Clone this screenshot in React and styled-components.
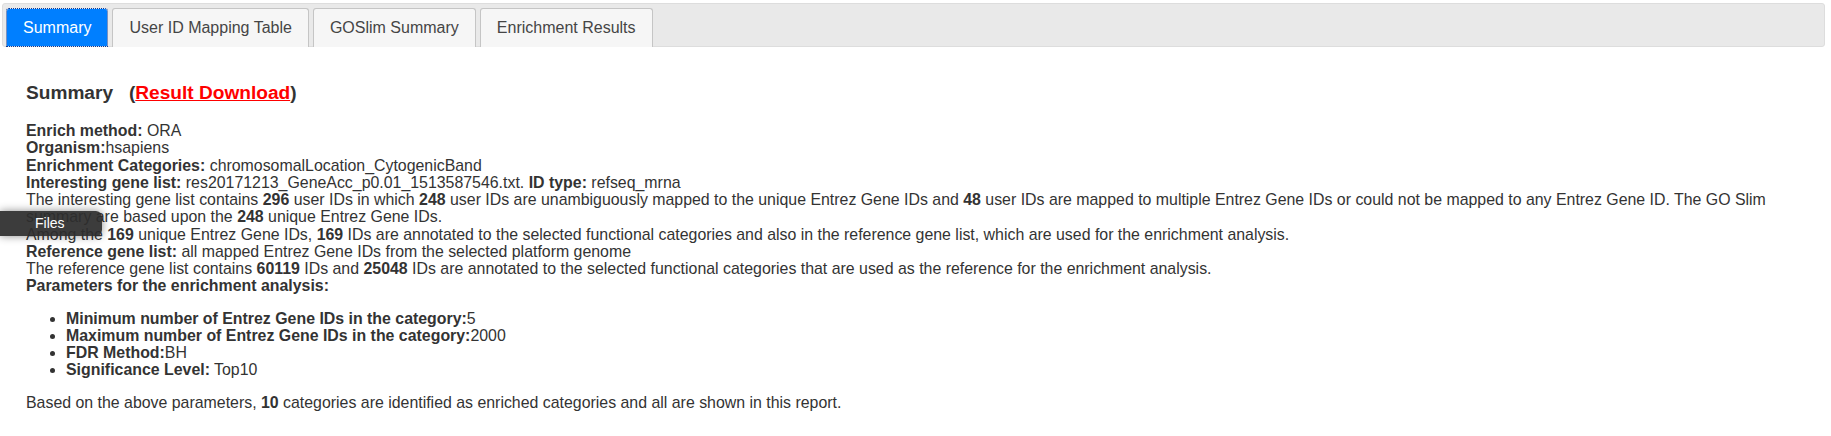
import React from 'react';
import styled, { createGlobalStyle } from 'styled-components';

const GlobalStyle = createGlobalStyle`
  body {
    margin: 0;
    background: #fff;
    font-family: "Liberation Sans", Arial, Helvetica, sans-serif;
  }
`;

const tabs = ['Summary', 'User ID Mapping Table', 'GOSlim Summary', 'Enrichment Results'];

const params = [
  { label: 'Minimum number of Entrez Gene IDs in the category:', value: '5' },
  { label: 'Maximum number of Entrez Gene IDs in the category:', value: '2000' },
  { label: 'FDR Method:', value: 'BH' },
  { label: 'Significance Level:', value: ' Top10' },
];

const App = () => {
  return (
    <Page>
      <GlobalStyle />
      <TabNav>
        {tabs.map((t, i) => (
          <Tab key={t} active={i === 0}>
            {t}
          </Tab>
        ))}
      </TabNav>

      <Panel>
        <Heading>
          Summary&nbsp;&nbsp;&nbsp;(<DownloadLink href="#">Result Download</DownloadLink>)
        </Heading>

        <Info>
          <div>
            <b>Enrich method:</b> ORA
          </div>
          <div>
            <b>Organism:</b>hsapiens
          </div>
          <div>
            <b>Enrichment Categories:</b> chromosomalLocation_CytogenicBand
          </div>
          <div>
            <b>Interesting gene list:</b> res20171213_GeneAcc_p0.01_1513587546.txt.{' '}
            <b>ID type:</b> refseq_mrna
          </div>
          <div>
            The interesting gene list contains <b>296</b> user IDs in which <b>248</b> user
            IDs are unambiguously mapped to the unique Entrez Gene IDs and <b>48</b> user IDs
            are mapped to multiple Entrez Gene IDs or could not be mapped to any Entrez Gene
            ID. The GO Slim summary are based upon the <b>248</b> unique Entrez Gene IDs.
          </div>
          <div>
            Among the <b>169</b> unique Entrez Gene IDs, <b>169</b> IDs are annotated to the
            selected functional categories and also in the reference gene list, which are used
            for the enrichment analysis.
          </div>
          <div>
            <b>Reference gene list:</b> all mapped Entrez Gene IDs from the selected platform
            genome
          </div>
          <div>
            The reference gene list contains <b>60119</b> IDs and <b>25048</b> IDs are
            annotated to the selected functional categories that are used as the reference for
            the enrichment analysis.
          </div>
          <div>
            <b>Parameters for the enrichment analysis:</b>
          </div>
          <ParamList>
            {params.map((p) => (
              <li key={p.label}>
                <b>{p.label}</b>
                {p.value}
              </li>
            ))}
          </ParamList>
          <Note>
            Based on the above parameters, <b>10</b> categories are identified as enriched
            categories and all are shown in this report.
          </Note>
        </Info>
      </Panel>

      <SideTip>Files</SideTip>
    </Page>
  );
};

const Page = styled.div`
  position: relative;
  padding: 3px 6px 0 2px;
  min-height: 436px;
  box-sizing: border-box;
`;

const TabNav = styled.div`
  display: flex;
  gap: 4px;
  height: 44px;
  box-sizing: border-box;
  padding: 4px 3px 0 3px;
  background: #e9e9e9;
  border: 1px solid #dddddd;
  border-radius: 3px;
`;

const Tab = styled.div`
  height: 39px;
  box-sizing: border-box;
  padding: 0 16px;
  line-height: 38px;
  font-size: 16px;
  white-space: nowrap;
  cursor: pointer;
  border-radius: 3px 3px 0 0;
  border: 1px solid ${(p) => (p.active ? '#0a3a9a' : '#c5c5c5')};
  border-style: ${(p) => (p.active ? 'dotted' : 'solid')};
  border-bottom-width: ${(p) => (p.active ? '1px' : '0')};
  background: ${(p) => (p.active ? '#007fff' : '#f6f6f6')};
  background-clip: padding-box;
  color: ${(p) => (p.active ? '#ffffff' : '#454545')};
`;

const Panel = styled.div`
  padding: 16px 22px 0 24px;
  color: #333;
`;

const Heading = styled.h3`
  margin: 18.5px 0;
  font-size: 19.1px;
  line-height: 22px;
  font-weight: bold;
  color: #333;
`;

const DownloadLink = styled.a`
  color: #ff0000;
  text-decoration: underline;
`;

const Info = styled.div`
  font-size: 15.9px;
  line-height: 17.25px;
  color: #333;
`;

const ParamList = styled.ul`
  margin: 15px 0;
  padding-left: 40px;
  list-style: disc;
`;

const Note = styled.p`
  margin: 15px 0;
`;

const SideTip = styled.div`
  position: absolute;
  left: 0;
  top: 211px;
  width: 102px;
  height: 25px;
  box-sizing: border-box;
  padding-left: 35px;
  line-height: 25px;
  font-size: 14px;
  color: #fff;
  background: rgba(45, 45, 45, 0.93);
  border-radius: 0 6px 6px 0;
  box-shadow: 0 0 8px rgba(0, 0, 0, 0.45);
`;

export default App;
